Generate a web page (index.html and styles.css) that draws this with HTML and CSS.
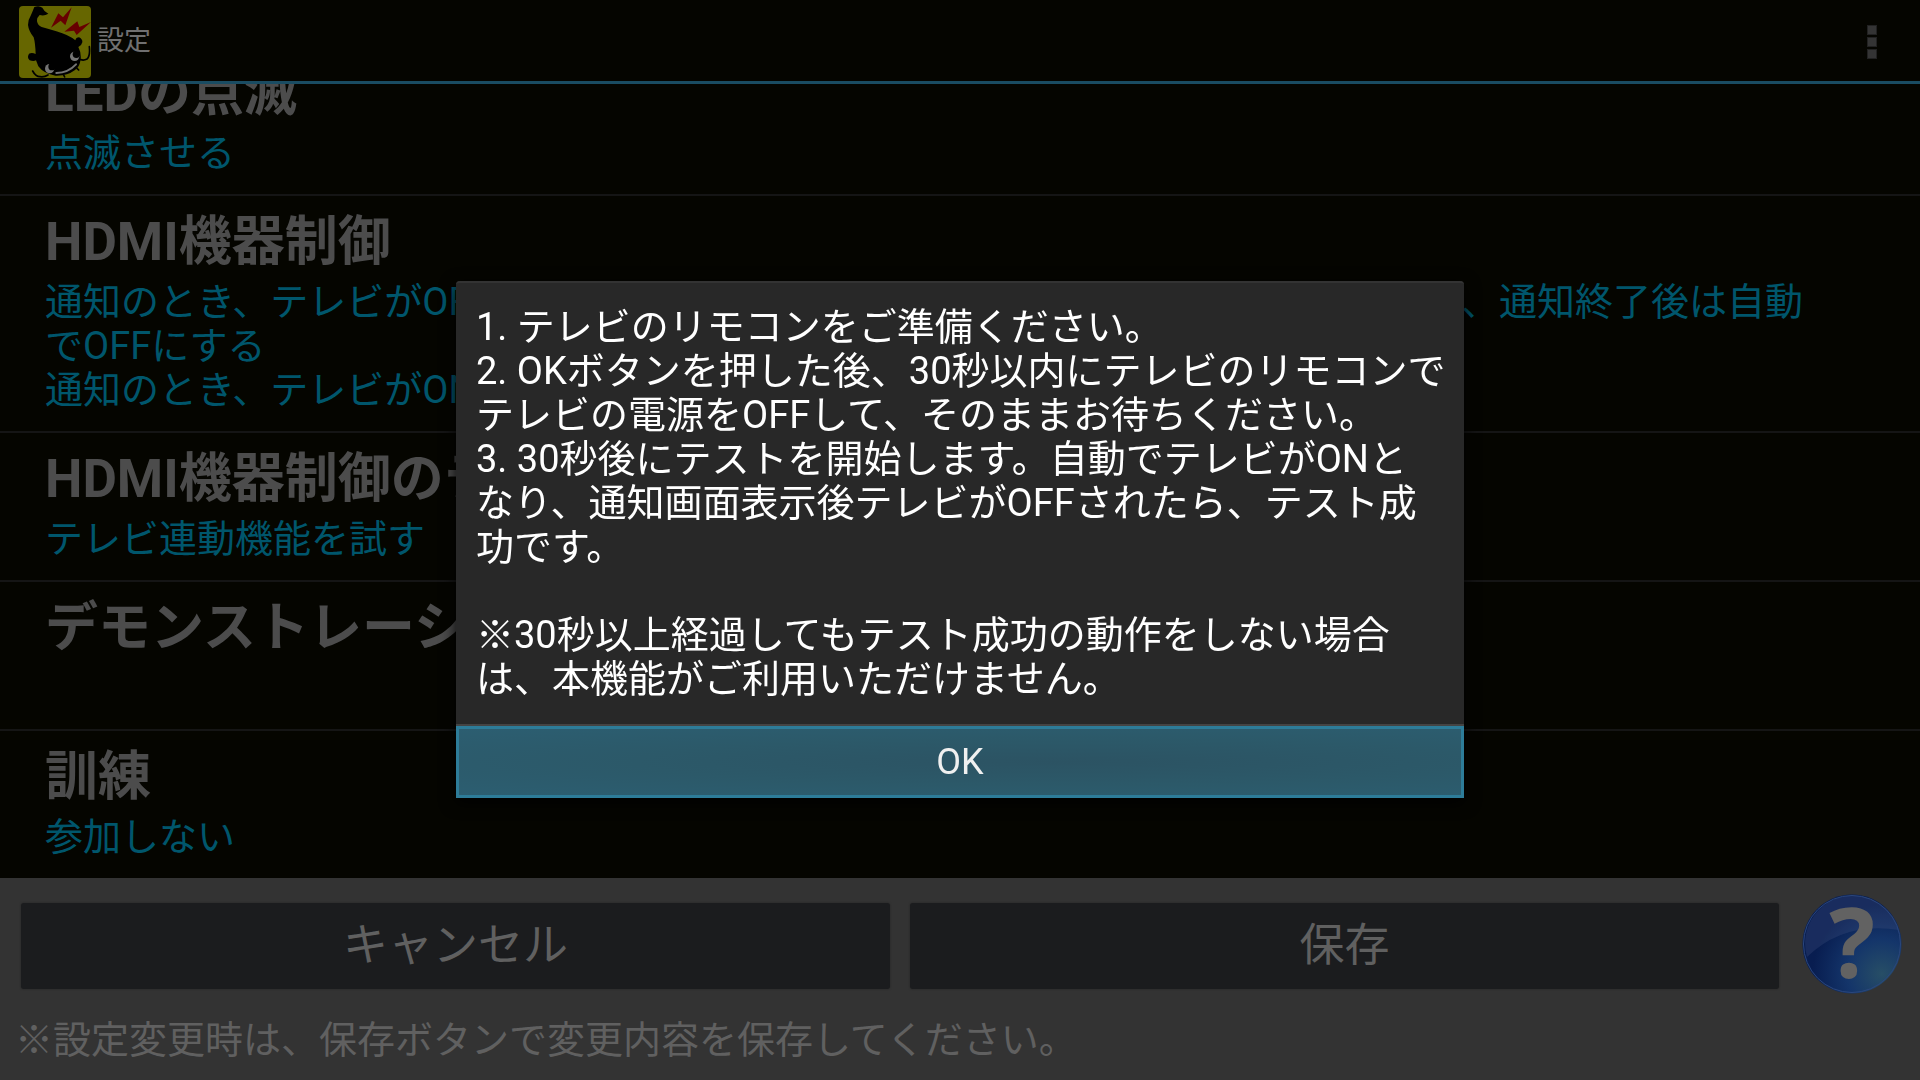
FILE: index.html
```html
<!DOCTYPE html>
<html lang="ja">
<head>
<meta charset="utf-8">
<meta name="viewport" content="width=device-width, initial-scale=1">
<title>設定</title>
<link rel="stylesheet" href="styles.css">
</head>
<body>
<div class="screen">
  <header class="action-bar">
    <svg class="app-icon" viewBox="0 0 216 216" aria-hidden="true">
      <rect width="216" height="216" rx="12" fill="#666600"/>
      <path fill="#670000" d="M158 4L139 58L125 44L96 65L118 22L132 34ZM216 48L173 87L165 74L136 77L175 46L181 63Z"/>
      <path fill="#000" d="M46 3Q60-3 70 5Q76 18 88 23Q76 31 62 27Q53 35 54 46Q56 58 68 63Q90 69 112 76Q150 87 169 103Q171 94 180 94Q191 99 190 109Q188 119 178 123Q187 140 185 160Q182 184 167 193Q145 210 110 209Q75 204 58 181L51 163Q44 167 32 163Q23 155 30 143Q39 138 50 144Q49 112 44 94Q29 75 27 57Q28 39 36 27Q40 18 46 3Z"/>
      <path fill="none" stroke="#000" stroke-width="5" stroke-linecap="round" d="M41 195Q50 212 63 212Q76 214 87 207M211 122Q214 151 204 159Q195 164 185 161M134 207L137 213M174 187L179 192"/>
      <circle cx="92" cy="188" r="14" fill="#747474"/>
      <circle cx="99" cy="182" r="11" fill="#000"/>
      <circle cx="167" cy="151" r="14" fill="#747474"/>
      <circle cx="172" cy="145" r="11" fill="#000"/>
      <path fill="none" stroke="#747474" stroke-width="6" stroke-linecap="round" d="M112 201Q148 200 171 175"/>
    </svg>
    <h1 class="screen-title">設定</h1>
    <button class="overflow-button" type="button" aria-label="メニュー">
      <span class="dot"></span><span class="dot"></span><span class="dot"></span>
    </button>
  </header>

  <main class="settings">
    <section class="setting">
      <h2 class="setting-title">LEDの点滅</h2>
      <p class="setting-value">点滅させる</p>
    </section>
    <section class="setting">
      <h2 class="setting-title">HDMI機器制御</h2>
      <p class="setting-value">通知のとき、テレビがOFFの場合には自動で ONにして通知内容を画面に表示します、通知終了後は自動<br>でOFFにする<br>通知のとき、テレビがONの場合には通知内容を表示する</p>
    </section>
    <section class="setting">
      <h2 class="setting-title">HDMI機器制御のテスト</h2>
      <p class="setting-value">テレビ連動機能を試す</p>
    </section>
    <section class="setting">
      <h2 class="setting-title">デモンストレーション</h2>
      <p class="setting-value"></p>
    </section>
    <section class="setting">
      <h2 class="setting-title">訓練</h2>
      <p class="setting-value">参加しない</p>
    </section>
  </main>

  <footer class="footer">
    <div class="footer-actions">
      <button class="footer-button" type="button">キャンセル</button>
      <button class="footer-button" type="button">保存</button>
      <button class="help-button" type="button" aria-label="ヘルプ">
        <svg class="help-icon" viewBox="0 0 100 100" aria-hidden="true">
          <defs>
            <radialGradient id="ball" cx="80%" cy="80%" r="70%">
              <stop offset="0" stop-color="#274e66"/>
              <stop offset="0.5" stop-color="#14356a"/>
              <stop offset="1" stop-color="#081d50"/>
            </radialGradient>
          </defs>
          <circle cx="50" cy="50" r="49.5" fill="url(#ball)"/>
          <path d="M5 63A47 47 0 1 1 97 36Q42 27 5 63Z" fill="#4a5a88" opacity="0.25"/>
          <circle cx="50" cy="50" r="48.5" fill="none" stroke="#2b477d" stroke-width="1"/>
          <text class="help-mark" x="50" y="84" text-anchor="middle">?</text>
        </svg>
      </button>
    </div>
    <p class="footer-note">※設定変更時は、保存ボタンで変更内容を保存してください。</p>
  </footer>
</div>

<div class="overlay">
  <div class="dialog" role="alertdialog" aria-modal="true" aria-describedby="dialog-message">
    <p class="dialog-message" id="dialog-message">1. テレビのリモコンをご準備ください。<br>2. OKボタンを押した後、30秒以内にテレビのリモコンで<br>テレビの電源をOFFして、そのままお待ちください。<br>3. 30秒後にテストを開始します。自動でテレビがONと<br>なり、通知画面表示後テレビがOFFされたら、テスト成<br>功です。<br><br>※30秒以上経過してもテスト成功の動作をしない場合<br>は、本機能がご利用いただけません。</p>
    <button class="dialog-button" type="button">OK</button>
  </div>
</div>
</body>
</html>
```
FILE: styles.css
```css
* {
  box-sizing: border-box;
}

body,
h1,
h2,
p {
  margin: 0;
}

body {
  background: #050500;
  font-family: Roboto, "Noto Sans CJK JP", sans-serif;
}

button {
  border: 0;
  padding: 0;
  background: none;
  color: inherit;
  font-family: inherit;
}

.screen {
  display: flex;
  flex-direction: column;
  height: 100vh;
  overflow: hidden;
}

/* Action bar */
.action-bar {
  display: flex;
  flex: none;
  align-items: center;
  height: 84px;
  padding: 0 43px 0 19px;
  border-bottom: 3px solid #1a4c62;
}

.app-icon {
  width: 72px;
  height: 72px;
  margin-top: 3px;
}

.screen-title {
  margin-left: 6px;
  color: #707070;
  font-size: 27px;
  font-weight: 400;
  line-height: 32px;
}

.overflow-button {
  display: grid;
  gap: 2px;
  margin-top: 3px;
  margin-left: auto;
}

.dot {
  width: 10px;
  height: 10px;
  border: 1px solid #212121;
  background: #343434;
}

/* Settings list, scrolled to its end */
.settings {
  display: flex;
  flex: 1;
  flex-direction: column;
  justify-content: flex-end;
  min-height: 0;
  overflow: hidden;
}

.setting {
  flex: none;
  padding: 15px 45px 19px;
  border-bottom: 2px solid #151515;
}

.setting:last-child {
  border-bottom: 0;
}

.setting-title {
  color: #4c4c4c;
  font-size: 53px;
  font-weight: 700;
  line-height: 62px;
}

.setting-value {
  min-height: 44px;
  margin-top: 7px;
  color: #00566c;
  font-size: 38px;
  line-height: 44px;
  white-space: nowrap;
}

/* Footer */
.footer {
  flex: none;
  padding: 16px 18px 18px 15px;
  background: #333;
}

.footer-actions {
  display: flex;
  align-items: center;
  gap: 20px;
  padding-left: 6px;
}

.footer-button {
  flex: 1;
  height: 86px;
  margin-top: 4px;
  border-radius: 3px;
  background: #1b1c1e;
  box-shadow: 0 0 2px #222;
  color: #606060;
  font-size: 45px;
  line-height: 54px;
}

.help-button {
  width: 100px;
  height: 100px;
  margin-left: 3px;
}

.help-icon {
  display: block;
  width: 100%;
}

.help-mark {
  fill: #626262;
  font-family: "Noto Sans", sans-serif;
  font-size: 96px;
  font-weight: 700;
}

.footer-note {
  margin-top: 24px;
  color: #606060;
  font-size: 38px;
  line-height: 44px;
}

/* Dialog */
.overlay {
  position: fixed;
  inset: 0;
  display: grid;
  place-items: center;
  padding-bottom: 1px;
}

.dialog {
  display: flex;
  flex-direction: column;
  width: 1008px;
  max-width: 96vw;
  border-radius: 4px 4px 0 0;
  background: #282828;
  box-shadow: 0 4px 16px #000;
}

.dialog-message {
  padding: 22px 20px 23px;
  border-top: 2px solid #333;
  border-bottom: 2px solid #444;
  border-radius: 4px 4px 0 0;
  color: #fff;
  font-size: 38px;
  line-height: 44px;
  white-space: nowrap;
}

.dialog-button {
  height: 72px;
  border: 3px solid #2d7c99;
  background: radial-gradient(ellipse at 60% 50%, #2c5363, #2c5969 50%, #2c5e71) padding-box;
  color: #f0f0f0;
  font-size: 36px;
  line-height: 42px;
}
```
